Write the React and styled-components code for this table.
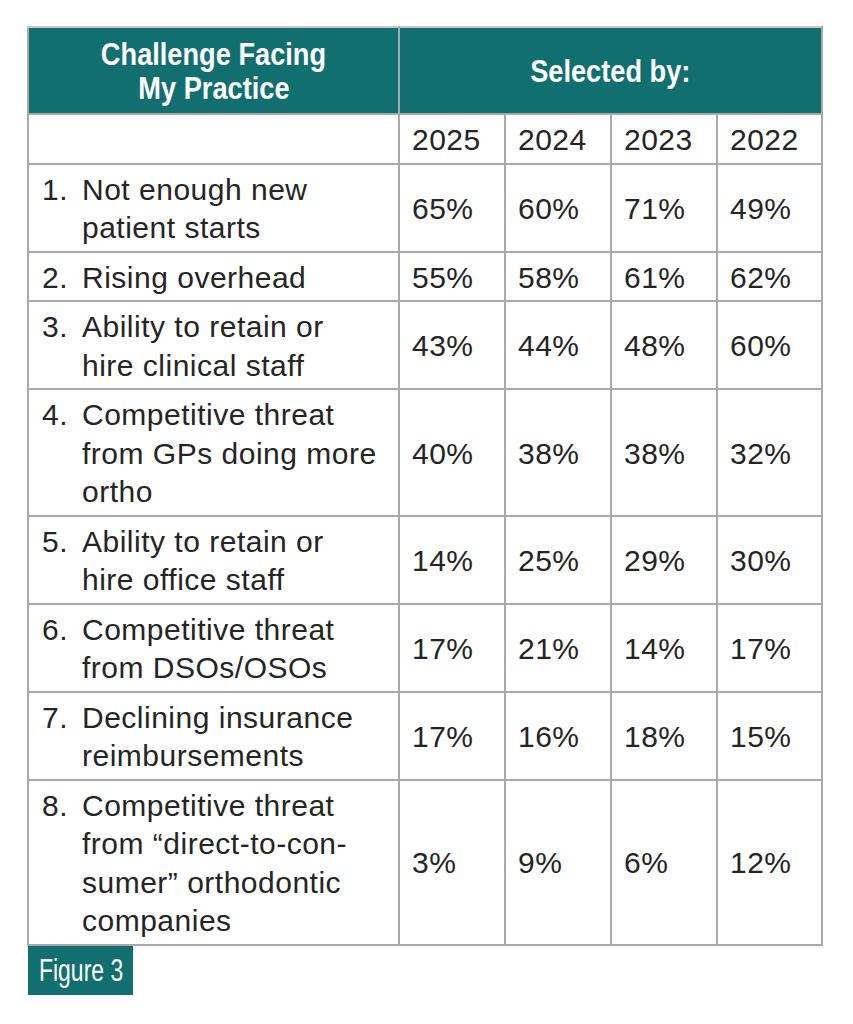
import React from "react";
import styled, { createGlobalStyle } from "styled-components";

const GlobalStyle = createGlobalStyle`
  html, body {
    margin: 0;
    padding: 0;
    background: #ffffff;
  }
`;

const TEAL = "#11706f";
const LINE = "#a9a9a9";
const INK = "#252525";

const Page = styled.div`
  padding: 26px 0 0 27px;
  font-family: "Liberation Sans", Arial, sans-serif;
  color: ${INK};
`;

const Table = styled.table`
  border-collapse: collapse;
  table-layout: fixed;
  width: 794px;
`;

const HeadCell = styled.th`
  background: ${TEAL};
  color: #ffffff;
  border: 2px solid ${LINE};
  border-top-color: #c9c9c9;
  font-weight: 700;
  font-size: 32px;
  line-height: 34px;
  padding: 9px 0 8px;
  text-align: center;
  vertical-align: middle;
`;

// condensed look for the display face
const Condensed = styled.span`
  display: inline-block;
  transform: scaleX(${(p) => p.$x || 0.85});
  transform-origin: ${(p) => p.$origin || "center"};
  white-space: nowrap;
`;

const Cell = styled.td`
  border: 2px solid ${LINE};
  font-size: 30px;
  line-height: 38.5px;
  letter-spacing: 0.5px;
  padding: 6px 0 3px ${(p) => (p.$first ? 13 : 12)}px;
  vertical-align: middle;
  white-space: nowrap;
`;

const Item = styled.div`
  display: flex;
`;

const Num = styled.span`
  flex: 0 0 40px;
`;

const Lines = styled.span`
  display: block;
`;

const FigureTag = styled.div`
  width: 105px;
  height: 49px;
  box-sizing: border-box;
  background: ${TEAL};
  color: #ffffff;
  font-size: 31px;
  line-height: 49px;
  padding-left: 11px;
  margin-left: 1px;
  overflow: hidden;
`;

const years = ["2025", "2024", "2023", "2022"];

const rows = [
  { n: "1.", lines: ["Not enough new", "patient starts"], v: ["65%", "60%", "71%", "49%"] },
  { n: "2.", lines: ["Rising overhead"], v: ["55%", "58%", "61%", "62%"] },
  { n: "3.", lines: ["Ability to retain or", "hire clinical staff"], v: ["43%", "44%", "48%", "60%"] },
  {
    n: "4.",
    lines: ["Competitive threat", "from GPs doing more", "ortho"],
    v: ["40%", "38%", "38%", "32%"],
  },
  { n: "5.", lines: ["Ability to retain or", "hire office staff"], v: ["14%", "25%", "29%", "30%"] },
  { n: "6.", lines: ["Competitive threat", "from DSOs/OSOs"], v: ["17%", "21%", "14%", "17%"] },
  { n: "7.", lines: ["Declining insurance", "reimbursements"], v: ["17%", "16%", "18%", "15%"] },
  {
    n: "8.",
    lines: ["Competitive threat", "from \u201cdirect-to-con-", "sumer\u201d orthodontic", "companies"],
    v: ["3%", "9%", "6%", "12%"],
  },
];

export default function App() {
  return (
    <>
      <GlobalStyle />
      <Page>
        <Table>
          <colgroup>
            <col style={{ width: 371 }} />
            <col style={{ width: 106 }} />
            <col style={{ width: 106 }} />
            <col style={{ width: 106 }} />
            <col style={{ width: 105 }} />
          </colgroup>
          <thead>
            <tr>
              <HeadCell>
                <Condensed>Challenge Facing</Condensed>
                <br />
                <Condensed>My Practice</Condensed>
              </HeadCell>
              <HeadCell colSpan={4}>
                <Condensed>Selected by:</Condensed>
              </HeadCell>
            </tr>
          </thead>
          <tbody>
            <tr>
              <Cell $first />
              {years.map((y) => (
                <Cell key={y}>{y}</Cell>
              ))}
            </tr>
            {rows.map((r) => (
              <tr key={r.n}>
                <Cell $first>
                  <Item>
                    <Num>{r.n}</Num>
                    <Lines>
                      {r.lines.map((l, i) => (
                        <React.Fragment key={i}>
                          {i > 0 && <br />}
                          {l}
                        </React.Fragment>
                      ))}
                    </Lines>
                  </Item>
                </Cell>
                {r.v.map((v, i) => (
                  <Cell key={i}>{v}</Cell>
                ))}
              </tr>
            ))}
          </tbody>
        </Table>
        <FigureTag>
          <Condensed $x={0.74} $origin="left">
            Figure 3
          </Condensed>
        </FigureTag>
      </Page>
    </>
  );
}
